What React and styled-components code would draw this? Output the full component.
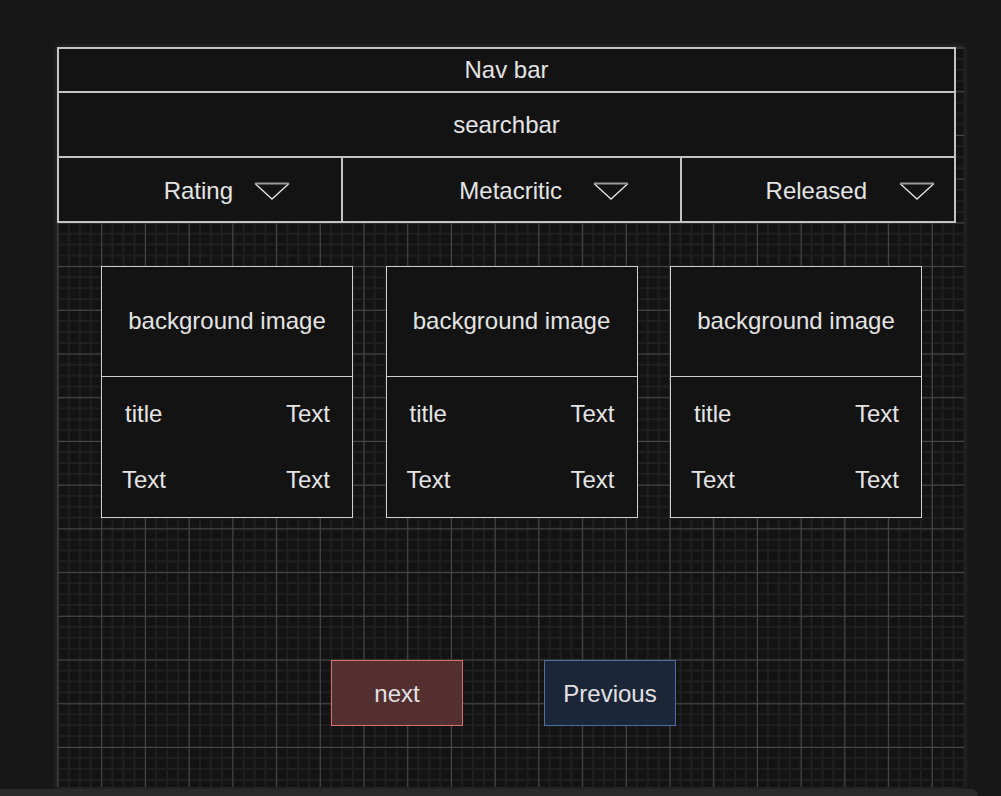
import React from "react";
import styled, { createGlobalStyle } from "styled-components";

const Global = createGlobalStyle`
  html, body { margin: 0; padding: 0; background: #171717; overflow: hidden; }
  body { font-family: "Liberation Sans", Arial, sans-serif; }
`;

const Page = styled.div`
  width: 1001px;
  height: 796px;
  display: flex;
  flex-direction: column;
`;

const Frame = styled.div`
  margin: 47px 0 0 57px;
  width: 907px;
  height: 740px;
  box-sizing: border-box;
  background-color: #131313;
  background-image:
    linear-gradient(to right, #474747 1px, transparent 1px),
    linear-gradient(to bottom, #474747 1px, transparent 1px),
    linear-gradient(to right, #1f1f1f 2px, transparent 2px),
    linear-gradient(to bottom, #1f1f1f 2px, transparent 2px);
  background-size: 43.72px 43.72px, 43.72px 43.72px, 10.93px 10.93px, 10.93px 10.93px;
  background-position: 0.5px 0.5px, 0.5px 0.5px, 0px 0px, 0px 0px;
  box-shadow: 0 0 5px 1px rgba(255, 255, 255, 0.1);
  display: flex;
  flex-direction: column;
  color: #e4e4e4;
  font-size: 24px;
`;

const Header = styled.div`
  width: 899px;
  height: 176px;
  box-sizing: border-box;
  border: 2px solid #c4c4c4;
  background: #131313;
  display: flex;
  flex-direction: column;
`;

const Row = styled.div`
  height: ${(p) => p.$h}px;
  box-sizing: border-box;
  border-bottom: ${(p) => (p.$last ? "none" : "2px solid #c4c4c4")};
  display: flex;
  align-items: center;
  justify-content: center;
`;

const FilterRow = styled.div`
  height: 63px;
  display: flex;
`;

const FilterCell = styled.div`
  width: ${(p) => p.$w}px;
  box-sizing: border-box;
  border-right: ${(p) => (p.$last ? "none" : "2px solid #c4c4c4")};
  display: flex;
  align-items: center;
  justify-content: flex-end;
  padding-right: ${(p) => p.$pr}px;
  gap: ${(p) => p.$gap}px;
  padding-top: 2px;
`;

const Caret = () => (
  <svg width="36" height="18" viewBox="0 0 36 18">
    <path d="M1 1.5 L18 17 L35 1.5" fill="none" stroke="#e2e2e2" strokeWidth="1.3" />
    <line x1="1" y1="1.5" x2="35" y2="1.5" stroke="#9a9a9a" strokeWidth="2.2" />
  </svg>
);

const Cards = styled.div`
  display: flex;
  gap: 32.5px;
  margin: 43px 0 0 44px;
`;

const Card = styled.div`
  width: 252px;
  height: 252px;
  box-sizing: border-box;
  border: 1.5px solid #cfcfcf;
  background: #131313;
  display: flex;
  flex-direction: column;
`;

const CardImage = styled.div`
  height: 108px;
  border-bottom: 1.5px solid #cfcfcf;
  display: flex;
  align-items: center;
  justify-content: center;
  padding-bottom: 1px;
`;

const CardInfo = styled.div`
  flex: 1;
  padding: 4px 22px 0 20px;
  display: grid;
  grid-template-columns: 1fr auto;
  grid-auto-rows: 66px;
  align-items: center;
`;

const InfoText = styled.span`
  padding-left: ${(p) => p.$indent || 0}px;
  justify-self: ${(p) => (p.$right ? "end" : "start")};
`;

const Buttons = styled.div`
  display: flex;
  gap: 81px;
  margin: 142px 0 0 274px;
`;

const Button = styled.div`
  width: 132px;
  height: 66px;
  box-sizing: border-box;
  border: 1px solid ${(p) => p.$border};
  background: ${(p) => p.$bg};
  display: flex;
  align-items: center;
  justify-content: center;
  color: #e2e2e2;
  padding-top: 1px;
`;

const BottomBar = styled.div`
  margin-top: 2px;
  width: 978px;
  flex: 1;
  background: #2a2a2a;
  border-top-right-radius: 12px;
`;

const cards = [0, 1, 2];

export default function App() {
  return (
    <Page>
      <Global />
      <Frame>
        <Header>
          <Row $h={44}>Nav bar</Row>
          <Row $h={65}>searchbar</Row>
          <FilterRow>
            <FilterCell $w={284} $pr={51} $gap={21}>
              Rating <Caret />
            </FilterCell>
            <FilterCell $w={339} $pr={51} $gap={31}>
              Metacritic <Caret />
            </FilterCell>
            <FilterCell $w={272} $pr={19} $gap={32} $last>
              Released <Caret />
            </FilterCell>
          </FilterRow>
        </Header>
        <Cards>
          {cards.map((c) => (
            <Card key={c}>
              <CardImage>background image</CardImage>
              <CardInfo>
                <InfoText $indent={3}>title</InfoText>
                <InfoText $right>Text</InfoText>
                <InfoText>Text</InfoText>
                <InfoText $right>Text</InfoText>
              </CardInfo>
            </Card>
          ))}
        </Cards>
        <Buttons>
          <Button $bg="#542f2f" $border="#d9716b">next</Button>
          <Button $bg="#1c2639" $border="#4d6e9e">Previous</Button>
        </Buttons>
      </Frame>
      <BottomBar />
    </Page>
  );
}
